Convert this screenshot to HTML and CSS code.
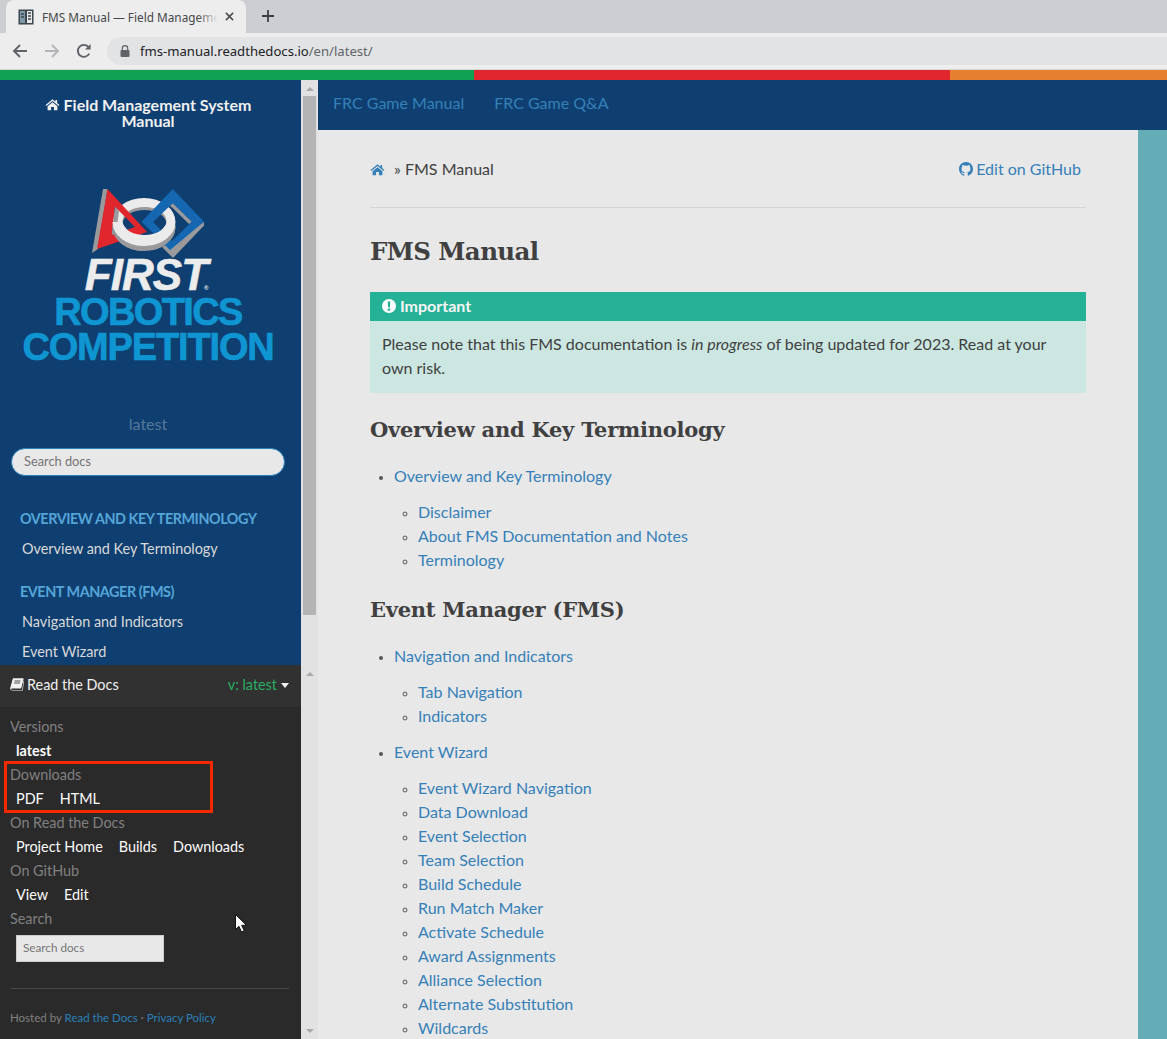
FILE: index.html
```html
<!DOCTYPE html>
<html lang="en">

<head>
    <meta charset="UTF-8">
    <meta name="viewport" content="width=device-width, initial-scale=1.0">
    <title>FMS Manual</title>
    <link rel="stylesheet" href="styles.css">
</head>

<body>
    <!-- Browser chrome -->
    <div class="tabstrip">
        <div class="tab">
            <svg class="favicon" viewBox="0 0 16 16">
                <rect x="0.5" y="0.5" width="15" height="15" fill="#3d464d"/>
                <rect x="2" y="2" width="5" height="12" fill="#7f99a8"/>
                <rect x="9" y="2" width="5" height="12" fill="#e8e8e8"/>
                <path d="M10 4h3M10 7h3M10 10h3M3 5h3M3 8h3" stroke="#3d464d" stroke-width="1.4"/>
            </svg>
            <span class="tab-title">FMS Manual — Field Management System Manual</span>
            <span class="tab-fade"></span>
            <svg class="tab-close" viewBox="0 0 10 10"><path d="M1 1l8 8M9 1l-8 8" stroke="#4a4c50" stroke-width="1.7"/></svg>
        </div>
        <svg class="new-tab" viewBox="0 0 12 12"><path d="M6 0v12M0 6h12" stroke="#3c4043" stroke-width="1.8"/></svg>
    </div>
    <div class="toolbar">
        <svg class="tool-icon" viewBox="0 0 16 16"><path d="M15 8H2M8 2L2 8l6 6" fill="none" stroke="#5f6368" stroke-width="1.9"/></svg>
        <svg class="tool-icon" viewBox="0 0 16 16"><path d="M1 8h13M8 2l6 6-6 6" fill="none" stroke="#b3b5b8" stroke-width="1.9"/></svg>
        <svg class="tool-icon" viewBox="0 0 16 16"><path d="M13.2 10.6A6 6 0 1 1 12.4 3.9" fill="none" stroke="#5f6368" stroke-width="1.9"/><path d="M14.6 1v5.6H9z" fill="#5f6368"/></svg>
        <div class="omnibox">
            <svg class="lock" viewBox="0 0 10 12"><path d="M2.3 5V3.4a2.7 2.7 0 0 1 5.4 0V5" fill="none" stroke="#5f6368" stroke-width="1.2"/><rect x="0.5" y="5" width="9" height="7" rx="1" fill="#5f6368"/></svg>
            <span class="url">fms-manual.readthedocs.io<span class="url-path">/en/latest/</span></span>
        </div>
    </div>
    <div class="stripes">
        <div class="stripe-green"></div>
        <div class="stripe-red"></div>
        <div class="stripe-orange"></div>
    </div>

    <div class="page">
        <!-- Sidebar -->
        <div class="sidebar">
            <div class="side-top">
                <div class="side-title">
                    <svg class="home-icon" viewBox="0 0 26 22"><path d="M13 2 1 12l1.4 1.7L13 4.9l10.6 8.8L25 12l-4-3.4V3h-3v3.1zM4.500 14.200V21h6v-5.500h5V21h6v-6.800L13 7.100z" fill="currentColor"/></svg>
                    Field Management System Manual
                </div>
                <div class="logo">
                    <svg class="logo-mark" viewBox="90 187 116 71">
                        <defs>
                            <g id="ring">
                                <path fill-rule="evenodd" fill="#9a9a9c" d="M112.500 227a31.500 24 0 1 0 63 0a31.500 24 0 1 0-63 0zM122.500 224a22 14 0 1 0 44 0a22 14 0 1 0-44 0z"/>
                                <path fill-rule="evenodd" fill="#ebebeb" d="M112.500 222a31.500 24 0 1 0 63 0a31.500 24 0 1 0-63 0zM122.500 221a22 14 0 1 0 44 0a22 14 0 1 0-44 0z"/>
                            </g>
                            <clipPath id="clip-left"><rect x="100" y="222" width="42" height="40"/></clipPath>
                            <clipPath id="clip-right"><rect x="152" y="226" width="30" height="30"/></clipPath>
                        </defs>
                        <use href="#ring"/>
                        <polygon points="103,189 107.500,189 98,249 92,253" fill="#9a9a9c"/>
                        <path fill-rule="evenodd" fill="#e1262d" d="M107.500 189 147 232 97 249zM115 206.700 135 227 111.700 235z"/>
                        <polygon points="115,206.700 119,211 116,233.500 111.700,235" fill="#9a9a9c"/>
                        <use href="#ring" clip-path="url(#clip-left)"/>
                        <polygon points="204,222 204,225.500 173,258 162,247" fill="#9a9a9c"/>
                        <path fill-rule="evenodd" fill="#1467b0" d="M172.700 189 204 221.700 170 250 141.700 221.700zM172.700 203.300 191.700 221.700 172 241 153 222z"/>
                        <polygon points="172.700,203.300 191.700,221.700 189,224 172.700,208 170,206" fill="#9a9a9c"/>
                        <use href="#ring" clip-path="url(#clip-right)"/>
                    </svg>
                    <div class="logo-first">FIRST<span class="logo-reg">®</span></div>
                    <div class="logo-line">ROBOTICS</div>
                    <div class="logo-line logo-wide">COMPETITION</div>
                </div>
                <div class="side-version">latest</div>
                <div class="side-search"><span>Search docs</span></div>
                <p class="caption">OVERVIEW AND KEY TERMINOLOGY</p>
                <a class="side-link">Overview and Key Terminology</a>
                <p class="caption">EVENT MANAGER (FMS)</p>
                <a class="side-link">Navigation and Indicators</a>
                <a class="side-link">Event Wizard</a>
            </div>

            <!-- Read the Docs flyout -->
            <div class="flyout">
                <div class="fly-head">
                    <span class="fly-brand">
                        <svg class="book-icon" viewBox="0 0 14 13"><path d="M3 .5h10.500L11 10.500H2.200C1.300 10.500 1 11 1.200 11.500c.2.400.6.6 1.200.6h9.800l1.300-9.600.5.500L12.800 12.500H2.200C.9 12.500 0 11.500.2 10z" fill="#f2f2f2"/><path d="M3 .5h10.500L11.200 9.500H1z" fill="#f2f2f2"/><path d="M4.500 3h6M4 5h6" stroke="#2b2a2b" stroke-width=".8"/></svg>
                        Read the Docs
                    </span>
                    <span class="fly-version">v: latest<span class="caret"></span></span>
                </div>
                <div class="fly-body">
                    <div class="fly-label">Versions</div>
                    <div class="fly-links"><a class="current">latest</a></div>
                    <div class="fly-label">Downloads</div>
                    <div class="fly-links"><a>PDF</a><a>HTML</a></div>
                    <div class="fly-label">On Read the Docs</div>
                    <div class="fly-links"><a>Project Home</a><a>Builds</a><a>Downloads</a></div>
                    <div class="fly-label">On GitHub</div>
                    <div class="fly-links"><a>View</a><a>Edit</a></div>
                    <div class="fly-label">Search</div>
                    <div class="fly-search"><span>Search docs</span></div>
                    <hr class="fly-rule">
                    <div class="fly-foot">Hosted by <a>Read the Docs</a> · <a>Privacy Policy</a></div>
                </div>
                <div class="red-box"></div>
                <svg class="cursor" viewBox="0 0 12 19"><path d="M.5.5v15l3.500-3.200 2.500 5.700 2.700-1.200-2.500-5.500h4.800z" fill="#fff" stroke="#111" stroke-width="1"/></svg>
            </div>
        </div>

        <!-- Scrollbar -->
        <div class="scrollbar">
            <div class="scroll-upper">
                <span class="arrow-up"></span>
                <div class="thumb"></div>
            </div>
            <div class="scroll-lower">
                <span class="arrow-up"></span>
                <span class="arrow-down"></span>
            </div>
        </div>

        <!-- Main Content Area -->
        <div class="main">
            <nav class="topnav">
                <a>FRC Game Manual</a>
                <a>FRC Game Q&amp;A</a>
            </nav>
            <div class="main-row">
                <div class="content">
                    <div class="crumbs">
                        <span class="crumb-left">
                            <svg class="crumb-home" viewBox="0 0 26 22"><path d="M13 2 1 12l1.400 1.700L13 4.900l10.600 8.800L25 12l-4-3.400V3h-3v3.100zM4.500 14.200V21h6v-5.500h5V21h6v-6.800L13 7.100z" fill="currentColor"/></svg>
                            <span class="crumb-text">» FMS Manual</span>
                        </span>
                        <a class="edit-link">
                            <svg class="github-icon" viewBox="0 0 16 16"><path fill="currentColor" d="M8 0C3.580 0 0 3.580 0 8c0 3.540 2.290 6.530 5.470 7.590.4.070.55-.17.55-.38v-1.340c-2.230.48-2.700-1.070-2.700-1.070-.36-.92-.89-1.170-.89-1.170-.73-.5.050-.49.050-.49.800.06 1.230.83 1.230.83.710 1.220 1.870.87 2.330.66.070-.52.280-.87.510-1.070-1.780-.2-3.640-.89-3.640-3.950 0-.87.310-1.590.820-2.150-.080-.2-.360-1.020.080-2.120 0 0 .670-.210 2.200.820a7.600 7.600 0 0 1 4 0c1.530-1.040 2.200-.820 2.200-.820.440 1.100.160 1.920.080 2.120.510.560.820 1.270.820 2.150 0 3.070-1.870 3.750-3.650 3.950.290.250.540.730.540 1.480v2.200c0 .210.150.460.550.380A8 8 0 0 0 16 8c0-4.420-3.580-8-8-8z"/></svg>
                            Edit on GitHub
                        </a>
                    </div>
                    <hr class="rule">
                    <h1>FMS Manual</h1>
                    <div class="admonition">
                        <div class="admonition-title">
                            <svg class="alert-icon" viewBox="0 0 14 14"><circle cx="7" cy="7" r="7" fill="#fff"/><path d="M5.700 2.500h2.600l-.4 6H6.100zM5.800 9.500h2.400v2.200H5.800z" fill="#25b195"/></svg>
                            Important
                        </div>
                        <p>Please note that this FMS documentation is <em>in progress</em> of being updated for 2023. Read at your own risk.</p>
                    </div>

                    <h2>Overview and Key Terminology</h2>
                    <ul class="toc">
                        <li><a>Overview and Key Terminology</a>
                            <ul>
                                <li><a>Disclaimer</a></li>
                                <li><a>About FMS Documentation and Notes</a></li>
                                <li><a>Terminology</a></li>
                            </ul>
                        </li>
                    </ul>

                    <h2>Event Manager (FMS)</h2>
                    <ul class="toc">
                        <li><a>Navigation and Indicators</a>
                            <ul>
                                <li><a>Tab Navigation</a></li>
                                <li><a>Indicators</a></li>
                            </ul>
                        </li>
                        <li><a>Event Wizard</a>
                            <ul>
                                <li><a>Event Wizard Navigation</a></li>
                                <li><a>Data Download</a></li>
                                <li><a>Event Selection</a></li>
                                <li><a>Team Selection</a></li>
                                <li><a>Build Schedule</a></li>
                                <li><a>Run Match Maker</a></li>
                                <li><a>Activate Schedule</a></li>
                                <li><a>Award Assignments</a></li>
                                <li><a>Alliance Selection</a></li>
                                <li><a>Alternate Substitution</a></li>
                                <li><a>Wildcards</a></li>
                            </ul>
                        </li>
                    </ul>
                </div>
                <div class="teal-edge"></div>
            </div>
        </div>
    </div>
</body>

</html>
```

FILE: styles.css
```css
/* styles.css */
html,
body {
    height: 100%;
}

body {
    font-family: Lato, "Noto Sans", sans-serif;
    font-size: 16px;
    margin: 0;
    padding: 0;
    display: flex;
    flex-direction: column;
    overflow: hidden;
    background-color: #e8e8e8;
    color: #404040;
}

a {
    color: #3580b8;
}

/* ......... browser chrome ......... */

.tabstrip {
    height: 33px;
    flex: none;
    display: flex;
    align-items: flex-end;
    background-color: #cdced2;
    padding-left: 6px;
}

.tab {
    width: 240px;
    height: 33px;
    box-sizing: border-box;
    background-color: #ededed;
    border-radius: 8px 8px 0 0;
    display: flex;
    align-items: center;
    padding-left: 12px;
    position: relative;
}

.favicon {
    width: 16px;
    height: 16px;
    flex: none;
}

.tab-title {
    font-family: "Noto Sans", sans-serif;
    font-size: 11.800px;
    color: #45474a;
    margin-left: 8px;
    width: 176px;
    overflow: hidden;
    white-space: nowrap;
}

.tab-fade {
    position: absolute;
    left: 192px;
    top: 6px;
    width: 20px;
    height: 22px;
    background: linear-gradient(to right, rgba(237, 237, 237, 0), #ededed);
}

.tab-close {
    width: 9px;
    height: 9px;
    margin-left: 7px;
}

.new-tab {
    width: 12px;
    height: 12px;
    margin: 0 0 11px 16px;
}

.toolbar {
    height: 37px;
    box-sizing: border-box;
    flex: none;
    display: flex;
    align-items: center;
    background-color: #ededed;
    border-bottom: 1px solid #d6d6d6;
    padding-left: 12px;
    gap: 16px;
}

.tool-icon {
    width: 16px;
    height: 16px;
    flex: none;
}

.omnibox {
    flex: 1;
    height: 28px;
    margin-left: -1px;
    background-color: #e2e3e5;
    border-radius: 14px 0 0 14px;
    display: flex;
    align-items: center;
    padding-left: 13px;
}

.lock {
    width: 10px;
    height: 12px;
}

.url {
    font-family: "Noto Sans", sans-serif;
    font-size: 13.100px;
    color: #202124;
    margin-left: 10px;
}

.url-path {
    color: #5f6368;
}

.stripes {
    height: 10px;
    flex: none;
    display: flex;
}

.stripe-green {
    width: 474px;
    background-color: #10a155;
}

.stripe-red {
    width: 476px;
    background-color: #e0262e;
}

.stripe-orange {
    flex: 1;
    background-color: #e67f2e;
}

.page {
    flex: 1;
    display: flex;
    min-height: 0;
}

/* ......... sidebar ......... */

.sidebar {
    width: 301px;
    flex: none;
    display: flex;
    flex-direction: column;
    background-color: #0f3f70;
}

.side-top {
    flex: 1;
    min-height: 0;
    overflow: hidden;
}

.side-title {
    color: #f0f0f0;
    font-weight: bold;
    font-size: 16px;
    line-height: 16px;
    text-align: center;
    padding: 17px 45px 0 40px;
}

.home-icon {
    width: 15px;
    height: 13px;
}

.logo {
    display: flex;
    flex-direction: column;
    align-items: center;
    margin: 58px 5px 0 0;
}

.logo-mark {
    width: 116px;
    height: 71px;
}

.logo-first {
    font-family: "Liberation Sans", sans-serif;
    font-weight: bold;
    font-style: italic;
    font-size: 44px;
    line-height: 34px;
    letter-spacing: -0.9px;
    color: #ececec;
    -webkit-text-stroke: 0.6px #ececec;
    margin: 0 4px 3px 0;
    position: relative;
}

.logo-reg {
    position: absolute;
    font-size: 6px;
    line-height: 6px;
    right: -1px;
    bottom: 1px;
    letter-spacing: 0;
    font-style: normal;
    -webkit-text-stroke: 0;
}

.logo-line {
    font-family: "Liberation Sans", sans-serif;
    font-weight: bold;
    font-size: 38px;
    line-height: 34px;
    letter-spacing: -1.650px;
    color: #0f96d2;
    -webkit-text-stroke: 0.6px #0f96d2;
}

.logo-line + .logo-line {
    margin-top: 1px;
}

.logo-wide {
    letter-spacing: -1.150px;
}

.side-version {
    color: rgba(255, 255, 255, 0.3);
    text-align: center;
    margin-top: 50px;
    padding-right: 5px;
    line-height: 20px;
}

.side-search {
    margin: 14px 16px 0 11px;
    height: 28px;
    box-sizing: border-box;
    background-color: #e8e8e8;
    border: 1px solid #2980b9;
    border-radius: 14px;
    padding-left: 12px;
    font-size: 12.800px;
    line-height: 25px;
    color: #757575;
}

.caption {
    margin: 33px 0 5px;
    padding-left: 20px;
    color: #55a5d9;
    font-weight: bold;
    font-size: 14.400px;
    line-height: 20px;
    letter-spacing: -0.46px;
}

.side-link {
    display: block;
    padding-left: 22px;
    color: #d9d9d9;
    font-size: 14.400px;
    line-height: 30px;
}

.side-link + .caption {
    margin-top: 18px;
}

.flyout {
    height: 374px;
    flex: none;
    background-color: #2b2a2b;
    position: relative;
    font-size: 14.400px;
}

.fly-head {
    height: 42px;
    background-color: #323132;
    display: flex;
    align-items: center;
    justify-content: space-between;
    padding: 0 12px 3px 10px;
    box-sizing: border-box;
}

.fly-brand {
    color: #f0f0f0;
    display: flex;
    align-items: center;
    gap: 3px;
}

.book-icon {
    width: 14px;
    height: 13px;
}

.fly-version {
    color: #27ae60;
}

.caret {
    display: inline-block;
    margin-left: 4px;
    border-left: 4.500px solid transparent;
    border-right: 4.500px solid transparent;
    border-top: 5px solid #f0f0f0;
    vertical-align: 2px;
}

.fly-body {
    padding: 8px 12px 0 10px;
}

.fly-label {
    color: #808080;
    line-height: 24px;
}

.fly-links {
    line-height: 24px;
    padding-left: 6px;
    display: flex;
    gap: 16px;
}

.fly-links a {
    color: #fcfcfc;
}

.fly-links .current {
    font-weight: bold;
}

.fly-search {
    margin: 4px 0 0 6px;
    width: 148px;
    height: 27px;
    box-sizing: border-box;
    background-color: #e8e8e8;
    border: 1px solid #cccccc;
    padding-left: 6px;
    font-size: 11.700px;
    line-height: 23px;
    color: #757575;
}

.fly-rule {
    border: 0;
    border-top: 1px solid #4a494a;
    margin: 26px 0 0;
}

.fly-foot {
    color: #808080;
    font-size: 11.500px;
    margin-top: 21px;
    line-height: 16px;
}

.fly-foot a {
    color: #2980b9;
}

.red-box {
    position: absolute;
    left: 4px;
    top: 96px;
    width: 203px;
    height: 46px;
    border: 3px solid #f52800;
}

.cursor {
    position: absolute;
    left: 235px;
    top: 249px;
    width: 12px;
    height: 19px;
}

/* ......... scrollbar ......... */

.scrollbar {
    width: 17px;
    flex: none;
    display: flex;
    flex-direction: column;
    background-color: #e2e2e2;
}

.scroll-upper {
    flex: 1;
    display: flex;
    flex-direction: column;
    align-items: center;
    padding-top: 7px;
}

.thumb {
    width: 13px;
    height: 519px;
    margin-top: 5px;
    background-color: #b4b4b4;
}

.scroll-lower {
    height: 374px;
    flex: none;
    display: flex;
    flex-direction: column;
    align-items: center;
    justify-content: space-between;
    padding: 7px 0 6px;
    box-sizing: border-box;
}

.arrow-up {
    border-left: 4px solid transparent;
    border-right: 4px solid transparent;
    border-bottom: 4px solid #a8a8a8;
}

.arrow-down {
    border-left: 4px solid transparent;
    border-right: 4px solid transparent;
    border-top: 4px solid #a8a8a8;
}

/* ......... main ......... */

.main {
    flex: 1;
    min-width: 0;
    display: flex;
    flex-direction: column;
}

.topnav {
    height: 50px;
    flex: none;
    background-color: #0f3f70;
    display: flex;
    align-items: center;
    gap: 30px;
    padding: 0 0 5px 15px;
    box-sizing: border-box;
}

.main-row {
    flex: 1;
    display: flex;
    min-height: 0;
}

.content {
    flex: 1;
    padding: 27px 52px 0;
    overflow: hidden;
    min-width: 0;
}

.teal-edge {
    width: 29px;
    flex: none;
    background-color: #64adb7;
}

.crumbs {
    display: flex;
    justify-content: space-between;
    line-height: 24px;
    padding-right: 5px;
}

.crumb-left {
    display: flex;
    align-items: center;
}

.crumb-home {
    width: 15px;
    height: 13px;
    color: #3580b8;
}

.crumb-text {
    margin-left: 9px;
}

.edit-link {
    display: flex;
    align-items: center;
    gap: 3px;
}

.github-icon {
    width: 14px;
    height: 14px;
}

.rule {
    border: 0;
    border-top: 1px solid #d4d4d4;
    margin: 26px 0 0;
}

h1,
h2 {
    font-family: "DejaVu Serif", serif;
    font-weight: bold;
    color: #404040;
    margin: 0;
}

h1 {
    font-size: 24.500px;
    line-height: 32px;
    letter-spacing: -0.6px;
    margin-top: 28px;
}

h2 {
    font-size: 21px;
    line-height: 28px;
    letter-spacing: -0.25px;
}

.admonition {
    margin-top: 24px;
    background-color: #cce7e1;
    height: 101px;
}

.admonition-title {
    height: 29px;
    box-sizing: border-box;
    background-color: #25b195;
    color: #f5f5f5;
    font-weight: bold;
    line-height: 27px;
    padding: 0 0 2px 12px;
    display: flex;
    align-items: center;
    gap: 4px;
}

.alert-icon {
    width: 14px;
    height: 14px;
}

.admonition p {
    margin: 0;
    padding: 11px 12px 0;
    line-height: 24px;
}

.admonition + h2 {
    margin-top: 23px;
}

.toc {
    margin: 0;
    padding-left: 24px;
    line-height: 24px;
}

.toc li::marker {
    font-size: 12px;
    color: #555555;
}

.toc ul {
    list-style: circle;
    margin: 12px 0;
    padding-left: 24px;
}

h2 + .toc {
    margin-top: 20px;
}

.toc + h2 {
    margin-top: 24px;
}
```
